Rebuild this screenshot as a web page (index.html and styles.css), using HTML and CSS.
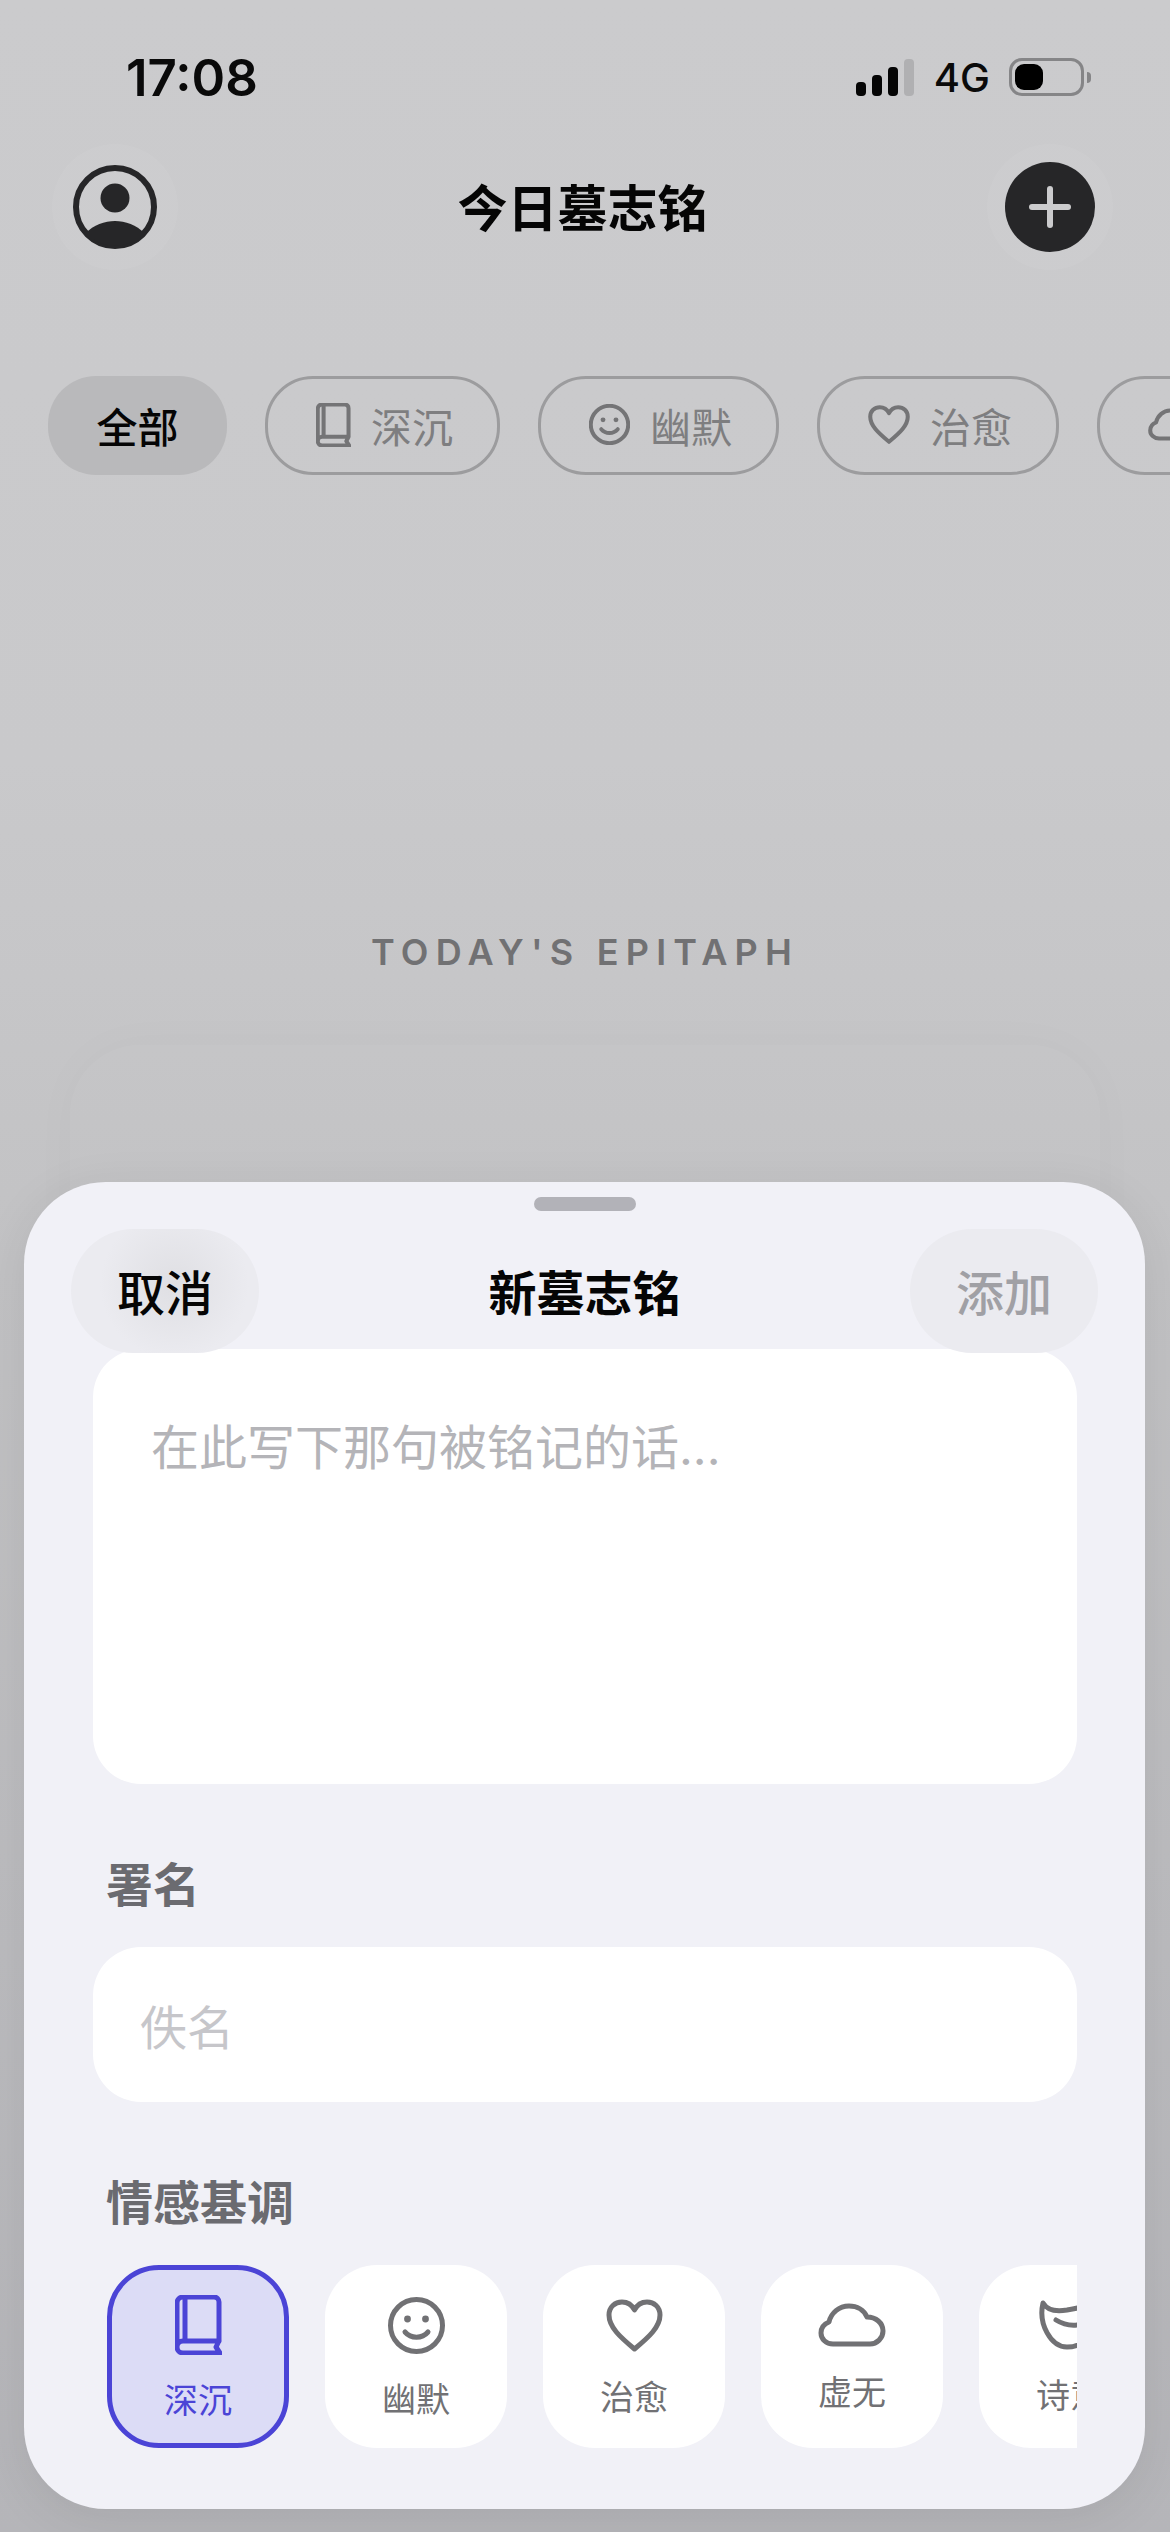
FILE: index.html
```html
<!DOCTYPE html>
<html lang="zh-CN">
<head>
  <meta charset="UTF-8" />
  <meta name="viewport" content="width=device-width, initial-scale=1.0"/>
  <title>今日墓志铭</title>
  <link rel="stylesheet" href="styles.css">
</head>
<body>

  <svg class="sprite" width="0" height="0">
    <symbol id="i-book" viewBox="0 0 47 60">
      <path d="M44 46V7a5 5 0 0 0-5-5H8a6 6 0 0 0-6 6v44a6 6 0 0 0 6 6h37l-4-6 3-6H8a6 6 0 0 0-6 6"/>
      <path d="M10 3v42"/>
    </symbol>
    <symbol id="i-smile" viewBox="0 0 57 57">
      <circle cx="28.5" cy="28.5" r="26"/>
      <circle class="dot" cx="19.5" cy="22" r="3.4"/>
      <circle class="dot" cx="37.5" cy="22" r="3.4"/>
      <path d="M17 35c6 7 17 7 23 0"/>
    </symbol>
    <symbol id="i-heart" viewBox="0 0 57 53">
      <path d="M28.5 50C14 38 3 28 3 16 3 8 9 3 16 3c5.500 0 10 3 12.500 8C31 6 35.500 3 41 3c7 0 13 5 13 13 0 12-11 22-25.500 34z"/>
    </symbol>
    <symbol id="i-cloud" viewBox="0 0 68 44">
      <path d="M15 41C8 41 3 36 3 30c0-5 3-9 8-11 2-9 10-16 20-16 8 0 15 4 18 11 9 0 16 6 16 14 0 7-6 13-13 13z"/>
    </symbol>
    <symbol id="i-mask" viewBox="0 0 66 50">
      <path d="M6 3c4 7 12 9 24 7 10-2 22-4 32-6 1 24-12 43-32 43C14 47 1 24 6 3z"/>
      <path d="M19 20c8 5 18 7 30 3"/>
    </symbol>
  </svg>

  <div class="screen">
    <div class="status-bar">
      <span class="time">17:08</span>
      <div class="status-right">
        <div class="signal">
          <i class="bar bar-1"></i><i class="bar bar-2"></i><i class="bar bar-3"></i><i class="bar bar-4"></i>
        </div>
        <span class="net">4G</span>
        <div class="battery"><div class="battery-level"></div></div>
        <div class="battery-tip"></div>
      </div>
    </div>

    <header class="top-bar">
      <div class="halo">
        <svg class="avatar" viewBox="0 0 84 84">
          <circle cx="42" cy="42" r="39" fill="none" stroke="#262628" stroke-width="6"/>
          <circle cx="42" cy="33" r="14.500" fill="#262628"/>
          <path d="M13 68c7-8 19-12 29-12s22 4 29 12a39 39 0 0 1-58 0z" fill="#262628"/>
        </svg>
      </div>
      <h1 class="page-title">今日墓志铭</h1>
      <div class="halo">
        <div class="add-btn"><span class="plus-h"></span><span class="plus-v"></span></div>
      </div>
    </header>

    <nav class="chips">
      <div class="chip chip-active">全部</div>
      <div class="chip"><svg class="chip-icon book"><use href="#i-book"/></svg>深沉</div>
      <div class="chip"><svg class="chip-icon smile"><use href="#i-smile"/></svg>幽默</div>
      <div class="chip"><svg class="chip-icon heart"><use href="#i-heart"/></svg>治愈</div>
      <div class="chip"><svg class="chip-icon cloud"><use href="#i-cloud"/></svg>虚无</div>
    </nav>

    <p class="epitaph-label">TODAY'S EPITAPH</p>
    <div class="ghost-card"></div>

    <section class="sheet">
      <div class="handle"></div>
      <div class="sheet-head">
        <button class="head-btn cancel">取消</button>
        <h2 class="sheet-title">新墓志铭</h2>
        <button class="head-btn add">添加</button>
      </div>

      <div class="sheet-body">
        <div class="text-box">在此写下那句被铭记的话...</div>

        <div class="field-label">署名</div>
        <div class="name-box">佚名</div>

        <div class="field-label">情感基调</div>
        <div class="tones">
          <div class="tone tone-active"><svg class="tone-icon t-book"><use href="#i-book"/></svg><span>深沉</span></div>
          <div class="tone"><svg class="tone-icon t-smile"><use href="#i-smile"/></svg><span>幽默</span></div>
          <div class="tone"><svg class="tone-icon t-heart"><use href="#i-heart"/></svg><span>治愈</span></div>
          <div class="tone"><svg class="tone-icon t-cloud"><use href="#i-cloud"/></svg><span>虚无</span></div>
          <div class="tone"><svg class="tone-icon t-mask"><use href="#i-mask"/></svg><span>诗意</span></div>
        </div>
      </div>
    </section>
  </div>

</body>
</html>
```

FILE: styles.css
```css
* {
  box-sizing: border-box;
}
body {
  margin: 0;
  font-family: Inter, "Noto Sans CJK SC", sans-serif;
}
.sprite {
  position: absolute;
}
.sprite path,
.sprite circle {
  fill: none;
  stroke: currentColor;
  stroke-linecap: round;
  stroke-linejoin: round;
}
.sprite circle.dot {
  fill: currentColor;
  stroke: none;
}
.screen {
  position: relative;
  width: 1170px;
  height: 2532px;
  overflow: hidden;
  background: linear-gradient(180deg, #cbcbcd 0%, #c9c9cb 30%, #c2c2c4 50%, #b5b5b9 100%);
}

/* status bar */
.status-bar {
  display: flex;
  justify-content: space-between;
  align-items: center;
  height: 54px;
  margin-top: 50px;
  padding: 0 79px 0 126px;
}
.time {
  font-size: 51px;
  font-weight: 600;
  color: #0a0a0a;
}
.status-right {
  display: flex;
  align-items: center;
}
.signal {
  display: flex;
  align-items: flex-end;
  gap: 6px;
  height: 37px;
  margin-right: 20px;
}
.bar {
  width: 10px;
  background: #050505;
  border-radius: 4px;
}
.bar-1 { height: 14px; }
.bar-2 { height: 21px; }
.bar-3 { height: 29px; }
.bar-4 { height: 37px; background: #b0b0b2; }
.net {
  font-size: 40px;
  font-weight: 500;
  color: #0a0a0a;
  margin-right: 19px;
}
.battery {
  width: 75px;
  height: 38px;
  padding: 3px;
  border: 3px solid #858587;
  border-radius: 13px;
}
.battery-level {
  width: 28px;
  height: 100%;
  background: #000;
  border-radius: 9px;
}
.battery-tip {
  width: 4px;
  height: 11px;
  margin-left: 3px;
  background: #858587;
  border-radius: 0 4px 4px 0;
}

/* header */
.top-bar {
  display: flex;
  justify-content: space-between;
  align-items: center;
  height: 126px;
  margin-top: 40px;
  padding: 0 57px 0 52px;
}
.halo {
  width: 126px;
  height: 126px;
  border-radius: 50%;
  background: rgba(255, 255, 255, 0.05);
  display: flex;
  align-items: center;
  justify-content: center;
}
.avatar {
  width: 84px;
  height: 84px;
}
.page-title {
  margin: 0;
  padding-bottom: 4px;
  font-size: 50px;
  font-weight: 600;
  color: #050505;
}
.add-btn {
  position: relative;
  width: 90px;
  height: 90px;
  border-radius: 50%;
  background: #262628;
}
.plus-h,
.plus-v {
  position: absolute;
  background: #cbcbcd;
  border-radius: 3px;
}
.plus-h {
  left: 24px;
  top: 42px;
  width: 42px;
  height: 6px;
}
.plus-v {
  left: 42px;
  top: 24px;
  width: 6px;
  height: 42px;
}

/* filter chips */
.chips {
  display: flex;
  gap: 38px;
  margin-top: 106px;
  padding-left: 48px;
}
.chip {
  flex: none;
  display: flex;
  align-items: center;
  gap: 20px;
  height: 99px;
  padding: 0 44px 2px 48px;
  border: 3px solid #9c9c9e;
  border-radius: 48px;
  font-size: 41px;
  color: #7e7e80;
}
.chip-active {
  padding: 0 45.5px 2px;
  border-color: transparent;
  background: #b9b9bb;
  color: #050505;
  font-weight: 500;
}
.chip-icon {
  color: #747476;
  stroke-width: 5.5;
}
.chip-icon.book { width: 35px; height: 44px; }
.chip-icon.smile { width: 41px; height: 41px; }
.chip-icon.heart { width: 42px; height: 39px; }
.chip-icon.cloud { width: 50px; height: 33px; }

/* blurred content behind the sheet */
.epitaph-label {
  margin: 455px 0 0;
  font-size: 36px;
  line-height: 44px;
  font-weight: 600;
  letter-spacing: 7.2px;
  text-align: center;
  color: #717173;
}
.ghost-card {
  height: 500px;
  margin: 71px 70px 0;
  border-radius: 70px;
  background: rgba(255, 255, 255, 0.015);
  box-shadow: 0 0 50px rgba(0, 0, 0, 0.025);
}

/* bottom sheet */
.sheet {
  position: absolute;
  left: 24px;
  top: 1182px;
  width: 1121px;
  height: 1327px;
  padding-top: 15px;
  background: #f1f1f7;
  border-radius: 82px;
  box-shadow: 0 10px 50px rgba(0, 0, 0, 0.08);
}
.handle {
  width: 102px;
  height: 14px;
  margin: 0 auto;
  border-radius: 7px;
  background: #b2b2b8;
}
.sheet-head {
  position: relative;
  z-index: 1;
  display: flex;
  justify-content: space-between;
  align-items: center;
  height: 124px;
  margin: 18px 0 -4px;
  padding: 0 47px;
}
.head-btn {
  width: 188px;
  height: 124px;
  padding: 0 0 3px;
  border: none;
  border-radius: 62px;
  font-family: inherit;
  font-size: 48px;
  background: #ebebf0;
}
.cancel {
  color: #050505;
  font-weight: 500;
  background: radial-gradient(circle at 55% 45%, #dfdfe3 0%, #ebebf0 60%);
}
.add {
  color: #a0a0a5;
  font-weight: 500;
}
.sheet-title {
  margin: 0;
  padding-bottom: 3px;
  font-size: 48px;
  font-weight: 600;
  color: #050505;
}
.sheet-body {
  padding: 0 68px 0 69px;
}
.text-box {
  height: 435px;
  padding: 69px 58px 0;
  background: #fff;
  border-radius: 48px;
  font-size: 48px;
  line-height: 60px;
  color: #b4b4b8;
}
.field-label {
  margin: 71px 0 32px 13px;
  font-size: 47px;
  line-height: 60px;
  font-weight: 600;
  color: #6b6b70;
}
.name-box {
  display: flex;
  align-items: center;
  height: 155px;
  padding-left: 47px;
  background: #fff;
  border-radius: 48px;
  font-size: 47px;
  color: #c6c6ca;
}
.tones {
  display: flex;
  gap: 36px;
  padding-left: 14px;
  overflow: hidden;
}
.tone {
  flex: none;
  display: flex;
  flex-direction: column;
  align-items: center;
  justify-content: center;
  gap: 29px;
  width: 182px;
  height: 183px;
  background: #fff;
  border-radius: 52px;
  font-size: 34px;
  line-height: 34px;
  color: #717174;
}
.tone-active {
  background: #dcdcf6;
  border: 5px solid #4b44d6;
  color: #4b44d6;
}
.tone-icon {
  flex: none;
  stroke-width: 5;
}
.t-book { width: 47px; height: 60px; }
.t-smile { width: 57px; height: 57px; }
.t-heart { width: 57px; height: 53px; }
.t-cloud { width: 68px; height: 44px; }
.t-mask { width: 66px; height: 50px; }
```
